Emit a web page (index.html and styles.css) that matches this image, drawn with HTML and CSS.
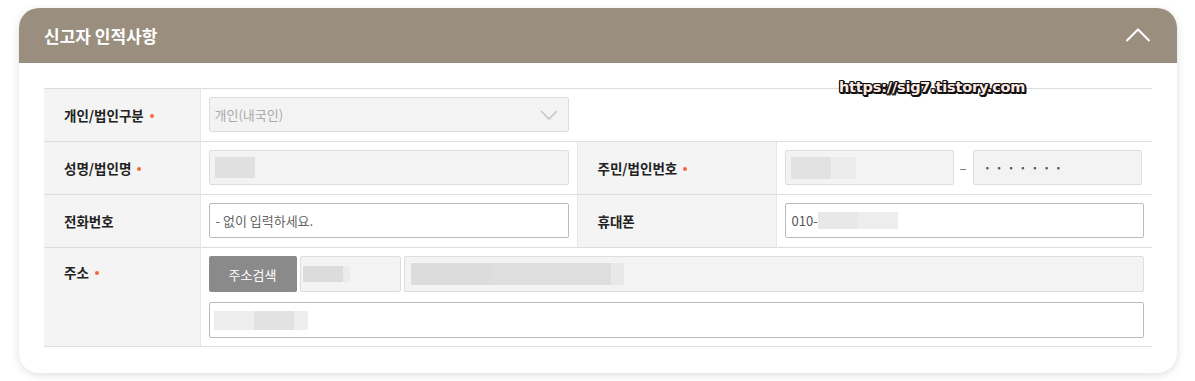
FILE: index.html
```html
<!doctype html>
<html>
<head>
<meta charset="UTF-8">
<meta name="viewport" content="width=device-width, initial-scale=1">
<link rel="stylesheet" href="styles.css">
</head>
<body>
<div class="card">
  <div class="card-head">
    <h2>신고자 인적사항</h2>
    <svg class="fold" width="26" height="14" viewBox="0 0 26 14"><polyline points="1.5,13 13,1.5 24.5,13" fill="none" stroke="#fff" stroke-width="2"/></svg>
  </div>
  <div class="watermark">https://sig7.tistory.com</div>
  <div class="card-body">
    <table class="form-table">
      <colgroup>
        <col style="width:156px">
        <col style="width:377px">
        <col style="width:199px">
        <col>
      </colgroup>
      <tr>
        <th>개인/법인구분<i class="req"></i></th>
        <td colspan="3">
          <div class="field select disabled w-half">
            <span>개인(내국인)</span>
            <svg width="18" height="10" viewBox="0 0 18 10"><polyline points="1,1 9,9 17,1" fill="none" stroke="#c4c4c4" stroke-width="1.5"/></svg>
          </div>
        </td>
      </tr>
      <tr>
        <th>성명/법인명<i class="req"></i></th>
        <td>
          <div class="field disabled"><span class="blur b-name"></span></div>
        </td>
        <th class="th2">주민/법인번호<i class="req"></i></th>
        <td>
          <div class="rrn">
            <div class="field disabled"><span class="blur b-rrn1"></span><span class="blur b-rrn2"></span></div>
            <span class="dash">–</span>
            <div class="field disabled"><span class="dots">· · · · · · ·</span></div>
          </div>
        </td>
      </tr>
      <tr>
        <th>전화번호</th>
        <td>
          <div class="field"><span class="placeholder">- 없이 입력하세요.</span></div>
        </td>
        <th class="th2">휴대폰</th>
        <td>
          <div class="field"><span class="val">010-</span><span class="blur b-mob1"></span><span class="blur b-mob2"></span></div>
        </td>
      </tr>
      <tr class="addr-row">
        <th>주소<i class="req"></i></th>
        <td colspan="3">
          <div class="addr-line">
            <button class="btn-search">주소검색</button>
            <div class="field disabled zip"><span class="blur b-zip1"></span><span class="blur b-zip2"></span></div>
            <div class="field disabled addr"><span class="blur b-addr1"></span><span class="blur b-addr2"></span><span class="blur b-addr3"></span></div>
          </div>
          <div class="field detail"><span class="blur b-det1"></span><span class="blur b-det2"></span><span class="blur b-det3"></span></div>
        </td>
      </tr>
    </table>
  </div>
</div>
</body>
</html>
```
FILE: styles.css
```css
body{
  margin: 0;
  padding: 8px 18px 9px 19px;
  background: #fff;
  font-family: 'Noto Sans CJK KR', 'Noto Sans', sans-serif;
  color: #222;
}

.card{
  position: relative;
  background: #fff;
  border-radius: 20px;
  box-shadow: 0 2px 8px rgba(0,0,0,0.13);
  overflow: hidden;
}

.card-head{
  height: 55px;
  background: #9a8f7e;
  display: flex;
  align-items: center;
  justify-content: space-between;
  padding: 0 26px 0 25px;
}

.card-head h2{
  margin: 0;
  color: #fff;
  font-size: 17px;
  font-weight: 700;
  line-height: 1;
  margin-top: -1px;
}

.fold{
  display: block;
  margin-bottom: 2px;
}

.watermark{
  position: absolute;
  left: 820px;
  top: 71px;
  font-family: 'DejaVu Sans', sans-serif;
  font-weight: 700;
  font-size: 14.5px;
  letter-spacing: -0.2px;
  color: #fde9e4;
  text-shadow: 1px 0 0 #111, -1px 0 0 #111, 0 1px 0 #111, 0 -1px 0 #111,
               1px 1px 0 #111, -1px -1px 0 #111, 1px -1px 0 #111, -1px 1px 0 #111,
               2px 0 0 #111, 0 2px 0 #111, 2px 2px 0 #111;
}

.card-body{
  padding: 25px 25px 26px 25px;
}

.form-table{
  width: 100%;
  border-collapse: collapse;
  table-layout: fixed;
  border-top: 1px solid #ddd;
  font-size: 13px;
}

.form-table tr{
  border-bottom: 1px solid #ddd;
}

.form-table th{
  background: #f4f4f4;
  text-align: left;
  font-weight: 700;
  font-size: 13.5px;
  padding: 0 0 0 20px;
  color: #222;
  border-right: 1px solid #e6e6e6;
}

.form-table th.th2{
  border-left: 1px solid #e6e6e6;
}

.form-table td{
  padding: 8px 8px 9px 8px;
}

.req{
  display: inline-block;
  width: 4px;
  height: 4px;
  border-radius: 50%;
  background: #f2683a;
  margin-left: 6px;
  vertical-align: 3px;
}

.field{
  box-sizing: border-box;
  height: 35px;
  border: 1px solid #bbb;
  border-radius: 2px;
  background: #fff;
  display: flex;
  align-items: center;
  padding: 0 5px;
}

.field.disabled{
  background: #f3f3f3;
  border-color: #ddd;
}

.w-half{
  width: 360px;
}

.select{
  justify-content: space-between;
  padding-right: 10px;
  color: #aaa;
}

.blur{
  display: inline-block;
  height: 20px;
  background: #e0e0e0;
}

.b-name{ width: 40px; height: 21px; }
.b-rrn1{ width: 40px; height: 22px; background: #e2e2e2; }
.b-rrn2{ width: 25px; height: 22px; background: #ececec; }

.rrn{
  display: flex;
  align-items: center;
}

.rrn .field{
  width: 169px;
}

.dash{
  width: 19px;
  text-align: center;
  color: #666;
}

.dots{
  color: #555;
  font-size: 13px;
  letter-spacing: 0.6px;
  padding-left: 5px;
  font-weight: 700;
}

.placeholder{
  color: #666;
  font-size: 13px;
  padding-left: 1px;
}

.val{
  color: #555;
  padding-left: 1px;
}

.b-mob1{ width: 40px; height: 17px; background: #e8e8e8; }
.b-mob2{ width: 40px; height: 17px; background: #ededed; }

.addr-row td{
  padding-bottom: 8px;
}

.addr-row th{
  vertical-align: top;
  padding-top: 14px;
}

.addr-line{
  display: flex;
  gap: 3px;
  margin-bottom: 10px;
}

.addr-line .field,
.btn-search{
  height: 36px;
}

.btn-search{
  width: 88px;
  border: 0;
  border-radius: 2px;
  background: #8a8a8a;
  color: #fff;
  font-family: inherit;
  font-size: 13px;
  padding: 0;
}

.zip{
  width: 101px;
  padding-left: 2px;
}

.b-zip1{ width: 40px; height: 16px; background: #dcdcdc; }
.b-zip2{ width: 7px; height: 16px; background: #ebebeb; }

.addr{
  flex: 1;
  padding-left: 6px;
}

.b-addr1{ width: 80px; height: 22px; background: #dcdcdc; }
.b-addr2{ width: 120px; height: 22px; background: #dedede; }
.b-addr3{ width: 13px; height: 22px; background: #e8e8e8; }

.detail{
  height: 36px;
  padding-left: 4px;
}

.b-det1{ width: 40px; height: 19px; background: #ededed; }
.b-det2{ width: 40px; height: 19px; background: #e2e2e2; }
.b-det3{ width: 14px; height: 19px; background: #eeeeee; }
```
